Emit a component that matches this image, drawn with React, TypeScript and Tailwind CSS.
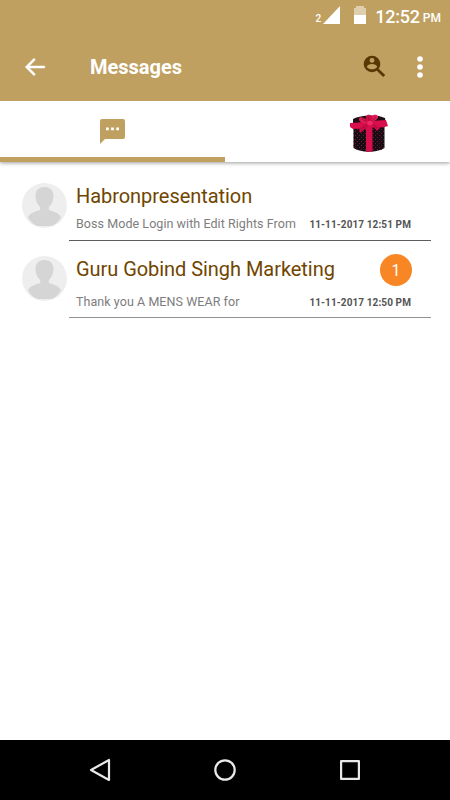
const chats = [
  {
    name: "Habronpresentation",
    preview: "Boss Mode Login with Edit Rights From",
    time: "11-11-2017 12:51 PM",
    unread: 0,
    height: "h-[58px]",
    gap: "mt-[6px]",
    line: "border-[#5f5c60]",
  },
  {
    name: "Guru Gobind Singh Marketing",
    preview: "Thank you A MENS WEAR for",
    time: "11-11-2017 12:50 PM",
    unread: 1,
    height: "h-[62px]",
    gap: "mt-[11px]",
    line: "border-[#929292]",
  },
];

function StatusBar() {
  return (
    <div className="flex h-8 items-center justify-end pr-[9px] text-white">
      <span className="mt-[6px] text-[10px] leading-none font-medium">2</span>
      <svg className="mb-[2px] ml-[2px] h-[18px] w-[17px]" viewBox="0 0 17 18" fill="currentColor">
        <path d="M17 0v18H0z" />
      </svg>
      <svg className="mb-[2px] ml-[14px] h-[18px] w-[12px]" viewBox="0 0 12 18">
        <path d="M2 0h8v2h2v7H0V2h2z" fill="#dfcfae" />
        <path d="M0 9h12v8.5l-.5.5H.5l-.5-.5z" fill="#fff" />
      </svg>
      <span className="mt-px ml-[9px] text-[18px] leading-none font-medium tracking-[-0.2px]">12:52</span>
      <span className="mt-[4px] ml-[3px] text-[12px] leading-none font-medium">PM</span>
    </div>
  );
}

function Toolbar() {
  return (
    <div className="flex h-[69px] items-center text-white">
      <svg
        className="ml-[22px] h-[26px] w-[26px]"
        viewBox="0 0 24 24"
        fill="currentColor"
        stroke="currentColor"
        strokeWidth="0.4"
      >
        <path d="M21 11H6.83l5.58-5.59L11 4l-8 8 8 8 1.41-1.41L6.83 13H21z" />
      </svg>
      <h1 className="mt-px ml-[42px] text-[20px] leading-none font-bold">Messages</h1>
      <svg className="mb-px ml-auto h-[23px] w-[23px]" viewBox="0 0 23 23">
        <circle cx="9" cy="9" r="8.3" fill="#583803" />
        <path d="M14 14l7.2 7.1" stroke="#583803" strokeWidth="2.8" />
        <circle cx="9" cy="5.4" r="2.4" fill="#bfa060" />
        <path d="M3.8 12c.7-4 9.7-4 10.4 0-2.5 3.1-7.9 3.1-10.4 0z" fill="#bfa060" />
      </svg>
      <svg className="mr-[26px] ml-[30px] h-[22px] w-[8px]" viewBox="0 0 8 22" fill="currentColor">
        <circle cx="4" cy="3" r="2.8" />
        <circle cx="4" cy="11" r="2.8" />
        <circle cx="4" cy="19" r="2.8" />
      </svg>
    </div>
  );
}

function GiftIcon() {
  return (
    <svg className="h-[39px] w-[38px]" viewBox="0 0 38 39">
      <defs>
        <pattern id="dots" width="4" height="4" patternUnits="userSpaceOnUse">
          <path d="M1 1h1v1H1zM3 3h1v1H3z" fill="#6b1c38" />
        </pattern>
      </defs>
      <path d="M3.500 10h31v24c-8 5-23 5-31 0z" fill="#170d12" />
      <path d="M3.500 10h31v24c-8 5-23 5-31 0z" fill="url(#dots)" />
      <path d="M3 5c7-4 24-5 32-1l1 8c-9 3-24 3-33 0z" fill="#1c0f15" />
      <path d="M16 10h6.500v27.500H16z" fill="#d80f4c" />
      <path d="M0 9c6 0 12-1 18-2 7 0 13-1 18-1l2 6c-6 2-12 2-18 1-5 1-11 2-17 2l-3-2z" fill="#d80f4c" />
      <path d="M19 8C14 3 9 2 9 5c0 3 4 5 10 4zM20 7c1-7 6-7 8-5 1 3-3 5-8 6z" fill="#e41b57" />
      <path d="M16 7c-1-5 1-7 4-6 3 1 3 4 1 7zM17 9L9 14l1 5 9-7zM21 10l6 7 3-3-6-5z" fill="#cf0c47" />
      <path d="M11 4.500l6 3.500M26 3l-4 4M18 3l1 4M11 15l6-4M23 11l4 3" stroke="#960d3c" strokeWidth="0.8" />
      <ellipse cx="20" cy="9" rx="2.800" ry="2.300" fill="#ef2864" />
    </svg>
  );
}

function Tabs() {
  return (
    <div className="flex h-[61px] bg-white shadow-[0_1px_4px_rgba(0,0,0,0.4)]">
      <div className="flex w-1/2 justify-center border-b-[5px] border-[#bfa060] pt-[18px]">
        <svg className="h-[25px] w-[25px]" viewBox="0 0 25 25">
          <path d="M2 0h21q2 0 2 2v16q0 2-2 2H5l-5 5V2q0-2 2-2z" fill="#bfa060" />
          <path d="M6 8.5h2.8v2.8H6zM11.1 8.5h2.8v2.8h-2.8zM16.2 8.5H19v2.8h-2.8z" fill="#fff" />
        </svg>
      </div>
      <div className="flex w-1/2 justify-center pt-[13px] pl-[62px]">
        <GiftIcon />
      </div>
    </div>
  );
}

function Avatar() {
  return (
    <svg className="h-[45px] w-[45px] shrink-0" viewBox="0 0 45 45">
      <circle cx="22.5" cy="22.5" r="22.5" fill="#eee" />
      <path
        d="M22.5 4c-6 0-9.300 4-9 9.500.2 5 2.500 8.500 4.700 10.500v3c-4 1.500-10.500 2.500-12.200 7.500 3 4.500 7 8.500 10.500 8.500h12c3.500 0 7.500-4 10.500-8.500-1.700-5-8.200-6-12.200-7.500v-3c2.200-2 4.500-5.500 4.700-10.500.3-5.500-3-9.500-9-9.500z"
        fill="#d5d5d5"
      />
    </svg>
  );
}

function NavBar() {
  return (
    <nav className="flex h-[60px] items-center justify-between bg-black px-[89px]">
      <svg className="h-6 w-[22px]" viewBox="0 0 22 24" fill="none" stroke="#e9e9e9" strokeWidth="2.2" strokeLinejoin="round">
        <path d="M20 2v20L2 12z" />
      </svg>
      <svg className="h-[22px] w-[22px]" viewBox="0 0 22 22" fill="none" stroke="#e9e9e9" strokeWidth="2.2">
        <circle cx="11" cy="11" r="9.7" />
      </svg>
      <svg className="h-[22px] w-[22px]" viewBox="0 0 22 22" fill="none" stroke="#e9e9e9" strokeWidth="2.2" strokeLinejoin="round">
        <path d="M2.1 2.1h17.8v17.8H2.1z" />
      </svg>
    </nav>
  );
}

export default function App() {
  return (
    <div className="flex h-[800px] w-[450px] flex-col overflow-hidden bg-white font-[Roboto,sans-serif]">
      <header className="relative z-10 bg-[#bfa060]">
        <StatusBar />
        <Toolbar />
      </header>
      <Tabs />
      <main className="flex flex-1 flex-col gap-[15px] pt-[21px] pl-[22px]">
        {chats.map((chat) => (
          <div key={chat.name} className="flex items-start">
            <Avatar />
            <div
              className={`ml-[2px] w-[362px] border-b pr-[19px] pl-[7px] ${chat.height} ${chat.line}`}
            >
              <div className="flex h-[26px] items-center justify-between">
                <h2 className="text-[20px] tracking-[-0.05px] whitespace-nowrap text-[#704500]">{chat.name}</h2>
                {chat.unread > 0 && (
                  <span className="mt-[2px] flex h-8 w-8 shrink-0 items-center justify-center rounded-full bg-[#f98625] pt-[2px] text-base text-white">
                    {chat.unread}
                  </span>
                )}
              </div>
              <div className={`flex items-center justify-between whitespace-nowrap ${chat.gap}`}>
                <p className="text-[12.5px] tracking-[0.06px] text-[#7d7d7d]">{chat.preview}</p>
                <time className="mt-px mr-px text-[10px] font-bold tracking-[0.1px] text-[#555]">{chat.time}</time>
              </div>
            </div>
          </div>
        ))}
      </main>
      <NavBar />
    </div>
  );
}
